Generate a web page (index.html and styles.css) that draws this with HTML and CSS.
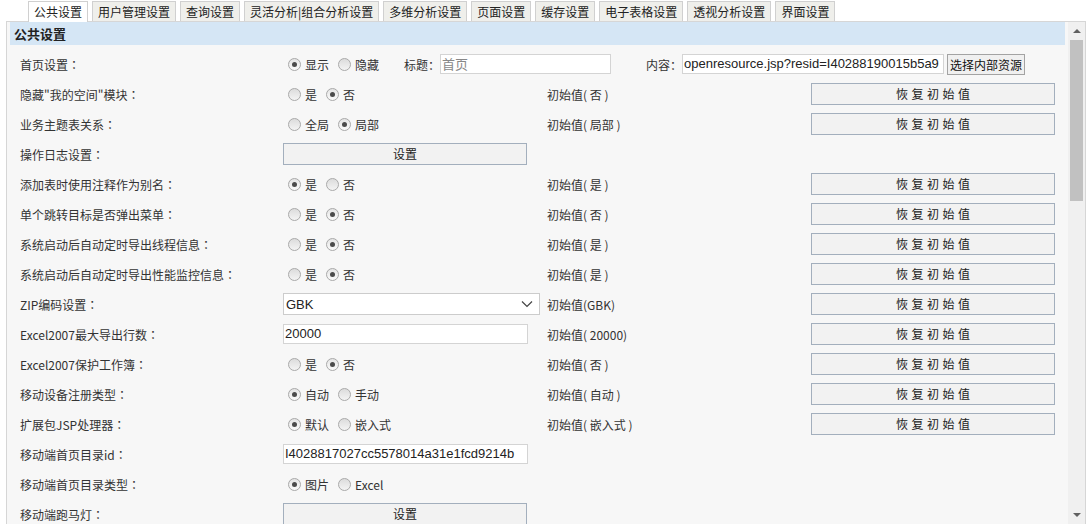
FILE: index.html
```html
<!DOCTYPE html>
<html lang="zh">
<head>
<meta charset="utf-8">
<title>公共设置</title>
<link rel="stylesheet" href="styles.css">
</head>
<body>
<div class="tabs">
  <span class="tab active">公共设置</span>
  <span class="tab">用户管理设置</span>
  <span class="tab">查询设置</span>
  <span class="tab">灵活分析|组合分析设置</span>
  <span class="tab">多维分析设置</span>
  <span class="tab">页面设置</span>
  <span class="tab">缓存设置</span>
  <span class="tab">电子表格设置</span>
  <span class="tab">透视分析设置</span>
  <span class="tab">界面设置</span>
</div>
<div class="frame">
  <div class="main">
    <div class="section-title">公共设置</div>
    <div class="grid">
      <div class="lbl">首页设置<span class="c">：</span></div>
      <div class="span3">
        <div class="radios w121"><span class="radio on"></span>显示<span class="radio sp"></span>隐藏</div>
        <span>标题<span class="c">：</span></span><span class="inp w171 ph">首页</span>
        <span class="ml35">内容<span class="c">：</span></span><span class="inp w262">openresource.jsp?resid=I40288190015b5a9</span>
        <span class="sbtn">选择内部资源</span>
      </div>

      <div class="lbl">隐藏"我的空间"模块<span class="c">：</span></div>
      <div class="radios"><span class="radio"></span>是<span class="radio on sp"></span>否</div>
      <div class="init">初始值( 否 )</div>
      <div><span class="btn reset">恢复初始值</span></div>

      <div class="lbl">业务主题表关系<span class="c">：</span></div>
      <div class="radios"><span class="radio"></span>全局<span class="radio on sp"></span>局部</div>
      <div class="init">初始值( 局部 )</div>
      <div><span class="btn reset">恢复初始值</span></div>

      <div class="lbl">操作日志设置<span class="c">：</span></div>
      <div><span class="btn set">设置</span></div>
      <div></div>
      <div></div>

      <div class="lbl">添加表时使用注释作为别名<span class="c">：</span></div>
      <div class="radios"><span class="radio on"></span>是<span class="radio sp"></span>否</div>
      <div class="init">初始值( 是 )</div>
      <div><span class="btn reset">恢复初始值</span></div>

      <div class="lbl">单个跳转目标是否弹出菜单<span class="c">：</span></div>
      <div class="radios"><span class="radio"></span>是<span class="radio on sp"></span>否</div>
      <div class="init">初始值( 否 )</div>
      <div><span class="btn reset">恢复初始值</span></div>

      <div class="lbl">系统启动后自动定时导出线程信息<span class="c">：</span></div>
      <div class="radios"><span class="radio"></span>是<span class="radio on sp"></span>否</div>
      <div class="init">初始值( 是 )</div>
      <div><span class="btn reset">恢复初始值</span></div>

      <div class="lbl">系统启动后自动定时导出性能监控信息<span class="c">：</span></div>
      <div class="radios"><span class="radio"></span>是<span class="radio on sp"></span>否</div>
      <div class="init">初始值( 是 )</div>
      <div><span class="btn reset">恢复初始值</span></div>

      <div class="lbl">ZIP编码设置<span class="c">：</span></div>
      <div><div class="select"><span>GBK</span><svg width="12" height="8" viewBox="0 0 12 8"><path d="M1 1.5 L6 6.5 L11 1.5" fill="none" stroke="#444" stroke-width="1.2"/></svg></div></div>
      <div class="init">初始值(GBK)</div>
      <div><span class="btn reset">恢复初始值</span></div>

      <div class="lbl">Excel2007最大导出行数<span class="c">：</span></div>
      <div><span class="inp w245">20000</span></div>
      <div class="init">初始值( 20000)</div>
      <div><span class="btn reset">恢复初始值</span></div>

      <div class="lbl">Excel2007保护工作簿<span class="c">：</span></div>
      <div class="radios"><span class="radio"></span>是<span class="radio on sp"></span>否</div>
      <div class="init">初始值( 否 )</div>
      <div><span class="btn reset">恢复初始值</span></div>

      <div class="lbl">移动设备注册类型<span class="c">：</span></div>
      <div class="radios"><span class="radio on"></span>自动<span class="radio sp"></span>手动</div>
      <div class="init">初始值( 自动 )</div>
      <div><span class="btn reset">恢复初始值</span></div>

      <div class="lbl">扩展包JSP处理器<span class="c">：</span></div>
      <div class="radios"><span class="radio on"></span>默认<span class="radio sp"></span>嵌入式</div>
      <div class="init">初始值( 嵌入式 )</div>
      <div><span class="btn reset">恢复初始值</span></div>

      <div class="lbl">移动端首页目录id<span class="c">：</span></div>
      <div><span class="inp w245">I4028817027cc5578014a31e1fcd9214b</span></div>
      <div></div>
      <div></div>

      <div class="lbl">移动端首页目录类型<span class="c">：</span></div>
      <div class="radios"><span class="radio on"></span>图片<span class="radio sp"></span>Excel</div>
      <div></div>
      <div></div>

      <div class="lbl">移动端跑马灯<span class="c">：</span></div>
      <div><span class="btn set">设置</span></div>
      <div></div>
      <div></div>
    </div>
  </div>
  <div class="scrollbar">
    <div class="arrow up"></div>
    <div class="thumb"></div>
    <div class="track"></div>
    <div class="arrow down"></div>
  </div>
</div>
</body>
</html>
```

FILE: styles.css
```css
html, body {
  margin: 0;
  padding: 0;
  background: #ffffff;
  overflow: hidden;
}
body {
  font-family: "Noto Sans CJK SC", "Noto Sans", sans-serif;
  font-size: 12px;
  color: #333333;
  width: 1091px;
  height: 524px;
}
.c {
  font-family: "Noto Sans CJK TC", "Noto Sans CJK SC", sans-serif;
}
.tabs {
  display: flex;
  gap: 4px;
  padding-left: 28px;
  padding-top: 1px;
  height: 20px;
}
.tab {
  height: 19px;
  line-height: 19px;
  padding: 0 5px;
  border: 1px solid #d0d0d0;
  border-bottom: none;
  background: #efefeb;
  font-size: 12px;
  color: #222222;
  white-space: nowrap;
}
.tab.active {
  background: #ffffff;
  height: 20px;
  position: relative;
  z-index: 1;
}
.frame {
  margin-left: 6px;
  width: 1078px;
  height: 502px;
  border: 1px solid #d6d6d6;
  background: #f7f7f7;
  display: flex;
  overflow: hidden;
}
.main {
  width: 1055px;
  padding: 0 3px;
  overflow: hidden;
}
.section-title {
  height: 23px;
  line-height: 23px;
  background: #d5e6f5;
  font-weight: bold;
  font-size: 13px;
  padding-left: 4px;
  color: #222222;
}
.grid {
  display: grid;
  grid-template-columns: 263px 264px 264px 264px;
  grid-auto-rows: 30px;
  padding-top: 4px;
  padding-left: 10px;
  align-items: center;
}
.grid > div {
  display: flex;
  align-items: center;
  height: 30px;
  white-space: nowrap;
}
.span3 {
  grid-column: span 3;
}
.radios {
  display: flex;
  align-items: center;
}
.w121 { width: 121px; flex: none; }
.radio {
  width: 11px;
  height: 11px;
  border: 1px solid #a9a9a9;
  border-radius: 50%;
  background: linear-gradient(#dcdcdc, #f4f4f4);
  margin: 0 4px 0 5px;
  display: inline-flex;
  align-items: center;
  justify-content: center;
  flex: none;
}
.radio.sp { margin-left: 9px; }
.radio.on {
  background: linear-gradient(#e4e4e4, #fafafa);
}
.radio.on::after {
  content: "";
  width: 5px;
  height: 5px;
  border-radius: 50%;
  background: #4a4a4a;
}
.inp {
  display: inline-block;
  box-sizing: border-box;
  height: 20px;
  line-height: 18px;
  border: 1px solid #d4d4d4;
  background: #ffffff;
  font-family: "Liberation Sans", "Noto Sans CJK SC", sans-serif;
  font-size: 13px;
  color: #222222;
  padding-left: 1px;
  overflow: hidden;
  flex: none;
}
.inp.ph {
  color: #888888;
  font-family: "Noto Sans CJK SC", sans-serif;
  font-size: 13px;
}
.w171 { width: 171px; }
.w262 { width: 262px; }
.w245 { width: 245px; }
.ml35 { margin-left: 35px; }
.sbtn {
  margin-left: 3px;
  box-sizing: border-box;
  width: 78px;
  height: 21px;
  line-height: 19px;
  border: 1px solid #a3a3a3;
  background: #f0f0f0;
  text-align: center;
  font-size: 12px;
  color: #111111;
  flex: none;
}
.btn {
  display: inline-block;
  box-sizing: border-box;
  width: 244px;
  height: 22px;
  line-height: 20px;
  border: 1px solid #a3afbd;
  background: #f2f2f2;
  text-align: center;
  color: #222222;
}
.btn.reset {
  letter-spacing: 3.5px;
  text-indent: 3.5px;
}
.select {
  box-sizing: border-box;
  width: 257px;
  height: 22px;
  border: 1px solid #cccccc;
  background: #ffffff;
  display: flex;
  align-items: center;
  justify-content: space-between;
  padding: 0 6px 0 2px;
  font-family: "Liberation Sans", sans-serif;
  font-size: 13px;
  color: #222222;
}
.init {
  color: #333333;
}
.scrollbar {
  width: 17px;
  background: #f0f0f0;
  display: flex;
  flex-direction: column;
  align-items: center;
}
.arrow {
  width: 0;
  height: 0;
  border-left: 4px solid transparent;
  border-right: 4px solid transparent;
  flex: none;
}
.arrow.up {
  border-bottom: 4px solid #606060;
  margin: 7px 0 7px;
}
.arrow.down {
  border-top: 4px solid #606060;
  margin: 7px 0 7px;
}
.thumb {
  width: 13px;
  height: 161px;
  background: #c1c1c1;
  flex: none;
}
.track {
  flex: 1;
}
```
